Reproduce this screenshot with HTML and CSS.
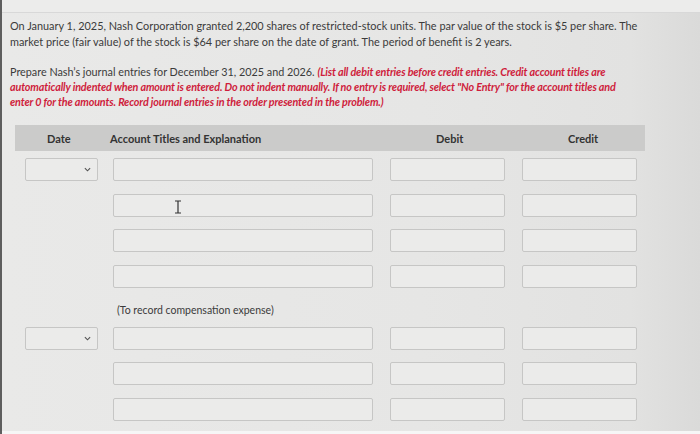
FILE: index.html
```html
<!DOCTYPE html>
<html lang="en">
<head>
<meta charset="utf-8">
<title>Journal entries</title>
<link rel="stylesheet" href="styles.css">
</head>
<body>
<div class="screen">
  <div class="topbar"></div>
  <div class="content">
    <p class="intro">On January 1, 2025, Nash Corporation granted 2,200 shares of restricted-stock units. The par value of the stock is $5 per share. The market price (fair value) of the stock is $64 per share on the date of grant. The period of benefit is 2 years.</p>
    <p class="task">Prepare Nash’s journal entries for December 31, 2025 and 2026. <span class="note">(List all debit entries before credit entries. Credit account titles are automatically indented when amount is entered. Do not indent manually. If no entry is required, select "No Entry" for the account titles and enter 0 for the amounts. Record journal entries in the order presented in the problem.)</span></p>

    <div class="journal">
      <div class="head">
        <span class="h-date">Date</span>
        <span class="h-acct">Account Titles and Explanation</span>
        <span class="h-debit">Debit</span>
        <span class="h-credit">Credit</span>
      </div>
      <div class="rows">
        <div class="select"><svg class="chev" viewBox="0 0 8 5" width="7" height="5"><path d="M1 1 L4 4 L7 1" fill="none" stroke="#555" stroke-width="1.3"/></svg></div>
        <div class="field acct"></div><div class="field amt"></div><div class="field amt"></div>

        <div class="blank"></div>
        <div class="field acct cursor-cell"><svg class="ibeam" viewBox="0 0 8 14" width="8" height="14"><path d="M1 1 H7 M4 1 V13 M1 13 H7" fill="none" stroke="#333" stroke-width="1.2"/></svg></div>
        <div class="field amt"></div><div class="field amt"></div>

        <div class="blank"></div>
        <div class="field acct"></div><div class="field amt"></div><div class="field amt"></div>

        <div class="blank"></div>
        <div class="field acct"></div><div class="field amt"></div><div class="field amt"></div>

        <div class="blank short"></div>
        <div class="explain">(To record compensation expense)</div>

        <div class="select"><svg class="chev" viewBox="0 0 8 5" width="7" height="5"><path d="M1 1 L4 4 L7 1" fill="none" stroke="#555" stroke-width="1.3"/></svg></div>
        <div class="field acct"></div><div class="field amt"></div><div class="field amt"></div>

        <div class="blank"></div>
        <div class="field acct"></div><div class="field amt"></div><div class="field amt"></div>

        <div class="blank"></div>
        <div class="field acct"></div><div class="field amt"></div><div class="field amt"></div>
      </div>
    </div>
  </div>
  <div class="bottomstrip"></div>
</div>
</body>
</html>
```

FILE: styles.css
```css
html, body {
  margin: 0;
  padding: 0;
}
body {
  width: 700px;
  height: 434px;
  overflow: hidden;
  font-family: Lato, "Liberation Sans", sans-serif;
  color: #3b3b3b;
}
.screen {
  position: relative;
  width: 700px;
  height: 434px;
  box-sizing: border-box;
  border-left: 2px solid #5e5e5e;
  background: linear-gradient(90deg, #e9e9e8 0%, #e6e6e5 60%, #e2e2e1 90%, #dadad9 100%);
  display: flex;
  flex-direction: column;
}
.topbar {
  height: 12px;
  flex: none;
  border-bottom: 1px solid #d8d8d8;
  background: #ececeb;
}
.content {
  flex: 1;
  padding: 5px 0 0 8px;
}
.intro {
  margin: 0;
  width: 632px;
  font-size: 10.9px;
  line-height: 16px;
}
.task {
  margin: 14px 0 0;
  width: 612px;
  font-size: 10.8px;
  line-height: 15px;
}
.note {
  color: #cf1d3c;
  font-style: italic;
  font-weight: 700;
  letter-spacing: -0.15px;
}
.journal {
  margin: 16px 0 0 5px;
  width: 630px;
}
.head {
  height: 26px;
  background: #cbcbca;
  display: grid;
  grid-template-columns: 95px 270px 140px 125px;
  align-items: center;
  font-size: 11px;
  font-weight: 700;
  color: #333;
}
.h-date { padding-left: 32px; }
.h-acct { padding-left: 0; }
.h-debit { padding-left: 56px; }
.h-credit { padding-left: 48px; }
.rows {
  margin-top: 7px;
  display: grid;
  grid-template-columns: 88px 277px 132px 115px;
  row-gap: 12.5px;
  padding-left: 10px;
}
.select, .field {
  height: 23px;
  box-sizing: border-box;
  border: 1px solid #c6c6c5;
  border-radius: 2px;
  background: #ebebea;
}
.select {
  width: 73px;
  display: flex;
  align-items: center;
  justify-content: flex-end;
  padding-right: 6px;
}
.acct { width: 260px; }
.amt { width: 115px; }
.blank { height: 23px; }
.blank.short { height: 14px; }
.cursor-cell {
  position: relative;
}
.ibeam {
  position: absolute;
  left: 60px;
  top: 5px;
}
.explain {
  grid-column: 2 / 5;
  height: 14px;
  box-sizing: border-box;
  padding: 4px 0 0 4px;
  font-size: 10.5px;
  line-height: 12px;
  color: #3b3b3b;
}
.bottomstrip {
  position: absolute;
  left: 0;
  right: 0;
  bottom: 0;
  height: 3px;
  background: #f6f6f6;
}
```
